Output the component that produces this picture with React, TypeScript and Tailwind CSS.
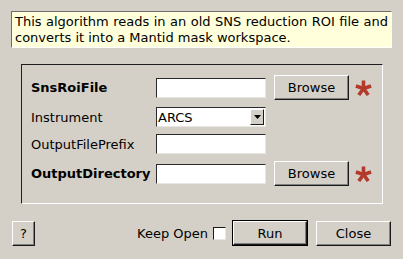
import React from "react";

const Star = () => (
  <svg width="17" height="16" viewBox="0 0 17 16" className="block">
    <g stroke="#b33a2b" strokeWidth="3.6" strokeLinecap="butt">
      {[0, 72, 144, 216, 288].map((a) => (
        <line key={a} x1="8.5" y1="8.5" x2="8.5" y2="0.5" transform={`rotate(${a} 8.5 8.5)`} />
      ))}
    </g>
  </svg>
);

const Btn = ({ children, w, className = "" }: { children: React.ReactNode; w: string; className?: string }) => (
  <div
    className={`${w} h-full flex items-center justify-center bg-[#d4d0c8] border-t border-l border-t-white border-l-white border-r border-b border-r-[#1a1a1a] border-b-[#1a1a1a] shadow-[inset_-1px_-1px_0_#808080] ${className}`}
  >
    {children}
  </div>
);

const Field = ({ children }: { children?: React.ReactNode }) => (
  <div className="w-[110px] h-[20px] bg-white border-t border-l border-t-[#2a2a2a] border-l-[#2a2a2a] border-r border-b border-r-[#e8e6e2] border-b-[#e8e6e2] flex items-center">
    {children}
  </div>
);

export default function App() {
  return (
    <div
      className="w-[403px] h-[259px] bg-[#d4d0c8] text-[13px] text-black leading-none overflow-hidden"
      style={{ fontFamily: '"DejaVu Sans", sans-serif' }}
    >
      <div className="pt-[11px] pl-[11px]">
        <div className="w-[381px] h-[37px] bg-[#ffffdc] border-t border-l border-t-[#6e6e6e] border-l-[#6e6e6e] border-r border-b border-r-white border-b-white pl-[3px] pr-[3px] pt-[2px] leading-[16px]">
          <div className="whitespace-nowrap [text-align:justify] [text-align-last:justify]">
            This algorithm reads in an old SNS reduction ROI file and
          </div>
          <div className="whitespace-nowrap">converts it into a Mantid mask workspace.</div>
        </div>
      </div>

      <div className="pl-[21px] pt-[16px]">
        <div className="w-[362px] h-[140px] border-t border-l border-t-[#1e1e1e] border-l-[#1e1e1e] border-r border-b border-r-white border-b-white pt-[10px] pl-[9px] flex flex-col gap-[7px]">
          <div className="h-[25px] flex items-center">
            <div className="w-[125px] font-bold">SnsRoiFile</div>
            <Field />
            <div className="ml-[8px] h-full">
              <Btn w="w-[75px]">Browse</Btn>
            </div>
            <div className="ml-[6px]">
              <Star />
            </div>
          </div>
          <div className="h-[20px] flex items-center">
            <div className="w-[125px]">Instrument</div>
            <Field>
              <span className="pl-[1px] flex-1">ARCS</span>
              <div className="w-[14px] h-[16px] mr-[1px] bg-[#d4d0c8] border-t border-l border-t-white border-l-white border-r border-b border-r-[#1a1a1a] border-b-[#1a1a1a] flex items-center justify-center">
                <svg width="7" height="4" viewBox="0 0 7 4">
                  <polygon points="0,0 7,0 3.5,4" fill="#000" />
                </svg>
              </div>
            </Field>
          </div>
          <div className="h-[20px] flex items-center">
            <div className="w-[125px]">OutputFilePrefix</div>
            <Field />
          </div>
          <div className="h-[25px] flex items-center">
            <div className="w-[125px] font-bold">OutputDirectory</div>
            <Field />
            <div className="ml-[8px] h-full">
              <Btn w="w-[75px]">Browse</Btn>
            </div>
            <div className="ml-[6px]">
              <Star />
            </div>
          </div>
        </div>
      </div>

      <div className="pt-[16px] pl-[12px] flex items-center h-[42px]">
        <div className="h-[25px]">
          <Btn w="w-[23px]">?</Btn>
        </div>
        <div className="ml-auto flex items-center">
          <span>Keep Open</span>
          <div className="ml-[5px] w-[13px] h-[13px] bg-white border-t border-l border-t-[#1a1a1a] border-l-[#1a1a1a] border-r border-b border-r-[#e8e6e2] border-b-[#e8e6e2]" />
        </div>
        <div className="ml-[6px] h-[26px] w-[76px] border border-black">
          <Btn w="w-full">Run</Btn>
        </div>
        <div className="ml-[8px] mr-[12px] h-[25px]">
          <Btn w="w-[75px]">Close</Btn>
        </div>
      </div>
    </div>
  );
}
